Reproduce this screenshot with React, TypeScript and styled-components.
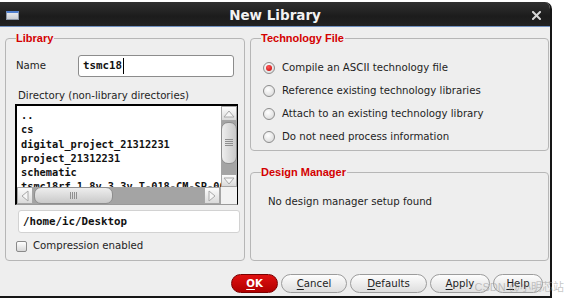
import React from 'react';
import styled, { createGlobalStyle } from 'styled-components';

const Global = createGlobalStyle`
  html, body { margin: 0; padding: 0; background: #fff; }
  body { width: 564px; height: 301px; overflow: hidden; font-family: "DejaVu Sans", sans-serif; }
`;

const Page = styled.div`
  position: relative;
  width: 564px;
  height: 301px;
  background: #fff;
  padding-top: 2px;
  box-sizing: border-box;
`;

const Window = styled.div`
  width: 552px;
  height: 296px;
  box-sizing: border-box;
  border-right: 2px solid #161616;
  border-bottom: 2px solid #161616;
  border-top-right-radius: 7px;
  background: #eeeeee;
  display: flex;
  flex-direction: column;
  overflow: hidden;
`;

const TitleBar = styled.div`
  height: 25px;
  flex: none;
  box-sizing: border-box;
  background: linear-gradient(#303030, #1c1c1c 60%, #222);
  border-bottom: 1px solid #7090c0;
  display: grid;
  grid-template-columns: 40px 1fr 40px;
  align-items: center;
`;

const WinIcon = styled.div`
  width: 13px;
  height: 9px;
  margin: 2px 0 0 6px;
  box-sizing: border-box;
  border: 1px solid #8a94a4;
  border-top: 2px solid #4f7fcf;
  background: linear-gradient(#e6e8ec, #c8ccd2);
`;

const TitleText = styled.div`
  text-align: center;
  color: #f2f2f2;
  font: bold 13.5px/16px "DejaVu Sans", sans-serif;
  padding-top: 2px;
`;

const CloseBox = styled.div`
  display: flex;
  justify-content: flex-end;
  padding: 3px 9px 0 0;
`;

const Body = styled.div`
  flex: 1;
  display: flex;
  flex-direction: column;
  padding: 5px 1px 0 5px;
`;

const Columns = styled.div`
  display: flex;
  gap: 5px;
`;

const LeftCol = styled.div`
  width: 240px;
  display: flex;
  flex-direction: column;
`;

const RightCol = styled.div`
  width: 299px;
  display: flex;
  flex-direction: column;
  gap: 15px;
`;

const Group = styled.fieldset<{ $h: number }>`
  margin: 0;
  min-width: 0;
  box-sizing: border-box;
  height: ${(p) => p.$h}px;
  border: 1px solid #b6b6b6;
  border-radius: 4px;
  padding: 0 10px;
`;

const GroupTitle = styled.legend`
  padding: 0 1px 0 0;
  font: bold 11px/13px "Liberation Sans", Arial, sans-serif;
  color: #d40000;
`;

const Text = styled.span`
  font: 10.2px/14px "DejaVu Sans", sans-serif;
  color: #1e1e1e;
  white-space: nowrap;
`;

const NameRow = styled.div`
  margin-top: 10px;
  height: 22px;
  display: flex;
  align-items: center;
`;

const NameLabel = styled(Text)`
  width: 62px;
`;

const TextField = styled.div`
  width: 156px;
  height: 22px;
  box-sizing: border-box;
  border: 1px solid #8c8c8c;
  border-radius: 3px;
  background: #fff;
  display: flex;
  align-items: center;
  padding-left: 4px;
  font: bold 10.8px/14px "DejaVu Sans Mono", monospace;
  color: #111;
`;

const Caret = styled.span`
  display: inline-block;
  width: 1px;
  height: 16px;
  margin-left: 1px;
  background: #000;
`;

const DirLabel = styled(Text)`
  display: block;
  margin-top: 12px;
  margin-left: 2px;
`;

const ListBox = styled.div`
  box-sizing: border-box;
  width: 223px;
  height: 101px;
  margin: 1px 0 0 -1px;
  border-top: 2px solid #000;
  border-left: 2px solid #000;
  border-right: 1px solid #000;
  border-bottom: 1px solid #9a9a9a;
  background: #fff;
  display: grid;
  grid-template-columns: 1fr 16px;
  grid-template-rows: 1fr 17px;
  overflow: hidden;
`;

const Items = styled.div`
  padding: 2px 0 0 4px;
  overflow: hidden;
`;

const Item = styled.div`
  font: bold 10.3px/14.3px "DejaVu Sans Mono", monospace;
  color: #111;
  white-space: nowrap;
`;

const VScroll = styled.div`
  background: #a4a4a4;
  display: flex;
  flex-direction: column;
`;

const HScroll = styled.div`
  background: #a4a4a4;
  display: flex;
  padding-right: 1px;
`;

const Corner = styled.div`
  background: #f2f2f2;
`;

const ArrowBtn = styled.div<{ $w: number; $h: number }>`
  flex: none;
  width: ${(p) => p.$w}px;
  height: ${(p) => p.$h}px;
  box-sizing: border-box;
  border: 1px solid #a6a6a6;
  background: linear-gradient(#fcfcfc, #dadada);
  display: flex;
  align-items: center;
  justify-content: center;
`;

const Thumb = styled.div<{ $vertical?: boolean }>`
  flex: none;
  box-sizing: border-box;
  border: 1px solid #8e8e8e;
  border-radius: 7px;
  background: ${(p) =>
    p.$vertical ? 'linear-gradient(90deg, #eeeeee, #c9c9c9)' : 'linear-gradient(#eeeeee, #c9c9c9)'};
  display: flex;
  align-items: center;
  justify-content: center;
`;

const PathField = styled.div`
  width: 222px;
  height: 23px;
  margin: 5px 0 0 2px;
  box-sizing: border-box;
  border: 1px solid #d2d2d2;
  border-radius: 3px;
  background: #fff;
  padding-left: 4px;
  font: bold 10.8px/21px "DejaVu Sans Mono", monospace;
  color: #111;
`;

const CheckRow = styled.div`
  margin-top: 6px;
  height: 14px;
  display: flex;
  align-items: center;
  gap: 6px;
`;

const CheckBox = styled.div`
  width: 11px;
  height: 11px;
  box-sizing: border-box;
  border: 1px solid #8a8a8a;
  border-radius: 2px;
  background: linear-gradient(#ffffff, #d8d8d8);
`;

const RadioList = styled.div`
  margin-top: 11px;
  display: flex;
  flex-direction: column;
`;

const RadioRow = styled.div`
  height: 23px;
  display: flex;
  align-items: center;
  gap: 7px;
  padding-left: 2px;
`;

const Radio = styled.div<{ $on?: boolean }>`
  width: 12px;
  height: 12px;
  box-sizing: border-box;
  border-radius: 50%;
  border: 1px solid #8c8c8c;
  background: radial-gradient(circle at 40% 35%, #ffffff, #d4d4d4);
  display: flex;
  align-items: center;
  justify-content: center;
  &::after {
    content: '';
    display: ${(p) => (p.$on ? 'block' : 'none')};
    width: 6px;
    height: 6px;
    border-radius: 50%;
    background: radial-gradient(circle at 40% 35%, #ff5a5a, #c00000);
  }
`;

const DMText = styled(Text)`
  display: block;
  margin: 16px 0 0 7px;
`;

const ButtonRow = styled.div`
  margin-top: 13px;
  height: 19px;
  display: flex;
  justify-content: flex-end;
  gap: 3px;
  padding-right: 6px;
`;

const Button = styled.div<{ $w: number; $primary?: boolean }>`
  width: ${(p) => p.$w}px;
  height: 19px;
  box-sizing: border-box;
  border-radius: 10px;
  border: 1px solid ${(p) => (p.$primary ? '#7a0000' : '#9c9c9c')};
  background: ${(p) =>
    p.$primary ? 'linear-gradient(#e01010, #b00000)' : 'linear-gradient(#fdfdfd, #dedede)'};
  color: ${(p) => (p.$primary ? '#fff' : '#1e1e1e')};
  font: ${(p) => (p.$primary ? 'bold' : 'normal')} 10.2px/17px "DejaVu Sans", sans-serif;
  text-align: center;
  u { text-underline-offset: 2px; }
`;

const Watermark = styled.div`
  position: absolute;
  right: 0;
  bottom: 7px;
  font: 11px/13px "Liberation Sans", "Noto Sans CJK SC", sans-serif;
  color: rgba(150, 150, 150, 0.55);
  white-space: nowrap;
`;

const Tri = ({ dir }: { dir: 'up' | 'down' | 'left' | 'right' }) => {
  const pts = {
    up: '1,8 6,2 11,8',
    down: '1,2 6,8 11,2',
    left: '8,1 2,6 8,11',
    right: '2,1 8,6 2,11',
  }[dir];
  const vert = dir === 'up' || dir === 'down';
  return (
    <svg width={vert ? 12 : 10} height={vert ? 10 : 12} viewBox={vert ? '0 0 12 10' : '0 0 10 12'}>
      <polygon points={pts} fill="#f6f6f6" stroke="#a8a8a8" strokeWidth="1" />
    </svg>
  );
};

const Grip = ({ vertical }: { vertical?: boolean }) =>
  vertical ? (
    <svg width="8" height="8" viewBox="0 0 8 8">
      {[0.5, 2.5, 4.5, 6.5].map((y) => (
        <line key={y} x1="0" x2="8" y1={y} y2={y} stroke="#8f8f8f" strokeWidth="1" />
      ))}
    </svg>
  ) : (
    <svg width="8" height="7" viewBox="0 0 8 7">
      {[0.5, 2.5, 4.5, 6.5].map((x) => (
        <line key={x} y1="0" y2="7" x1={x} x2={x} stroke="#8f8f8f" strokeWidth="1" />
      ))}
    </svg>
  );

const items = [
  '..',
  'cs',
  'digital_project_21312231',
  'project_21312231',
  'schematic',
  'tsmc18rf_1.8v_3.3v_T-018-CM-SP-005',
];

const radios = [
  'Compile an ASCII technology file',
  'Reference existing technology libraries',
  'Attach to an existing technology library',
  'Do not need process information',
];

export default function App() {
  return (
    <Page>
      <Global />
      <Window>
        <TitleBar>
          <WinIcon />
          <TitleText>New Library</TitleText>
          <CloseBox>
            <svg width="9" height="9" viewBox="0 0 9 9">
              <path d="M1 1 L8 8 M8 1 L1 8" stroke="#d6d6d6" strokeWidth="2" strokeLinecap="square" />
            </svg>
          </CloseBox>
        </TitleBar>
        <Body>
          <Columns>
            <LeftCol>
              <Group $h={229}>
                <GroupTitle>Library</GroupTitle>
                <NameRow>
                  <NameLabel>Name</NameLabel>
                  <TextField>
                    tsmc18
                    <Caret />
                  </TextField>
                </NameRow>
                <DirLabel>Directory (non-library directories)</DirLabel>
                <ListBox>
                  <Items>
                    {items.map((it) => (
                      <Item key={it}>{it}</Item>
                    ))}
                  </Items>
                  <VScroll>
                    <ArrowBtn $w={16} $h={15}>
                      <Tri dir="up" />
                    </ArrowBtn>
                    <Thumb $vertical style={{ height: 42, marginTop: 1 }}>
                      <Grip vertical />
                    </Thumb>
                    <div style={{ flex: 1 }} />
                    <ArrowBtn $w={16} $h={13}>
                      <Tri dir="down" />
                    </ArrowBtn>
                  </VScroll>
                  <HScroll>
                    <ArrowBtn $w={16} $h={17}>
                      <Tri dir="left" />
                    </ArrowBtn>
                    <Thumb style={{ width: 79, marginLeft: 1 }}>
                      <Grip />
                    </Thumb>
                    <div style={{ flex: 1 }} />
                    <ArrowBtn $w={16} $h={17}>
                      <Tri dir="right" />
                    </ArrowBtn>
                  </HScroll>
                  <Corner />
                </ListBox>
                <PathField>/home/ic/Desktop</PathField>
                <CheckRow>
                  <CheckBox />
                  <Text>Compression enabled</Text>
                </CheckRow>
              </Group>
            </LeftCol>
            <RightCol>
              <Group $h={119}>
                <GroupTitle>Technology File</GroupTitle>
                <RadioList>
                  {radios.map((r, i) => (
                    <RadioRow key={r}>
                      <Radio $on={i === 0} />
                      <Text>{r}</Text>
                    </RadioRow>
                  ))}
                </RadioList>
              </Group>
              <Group $h={95}>
                <GroupTitle>Design Manager</GroupTitle>
                <DMText>No design manager setup found</DMText>
              </Group>
            </RightCol>
          </Columns>
          <ButtonRow>
            <Button $w={47} $primary>
              <u>O</u>K
            </Button>
            <Button $w={66}>
              <u>C</u>ancel
            </Button>
            <Button $w={77}>
              <u>D</u>efaults
            </Button>
            <Button $w={60}>
              <u>A</u>pply
            </Button>
            <Button $w={50}>
              <u>H</u>elp
            </Button>
          </ButtonRow>
        </Body>
      </Window>
      <Watermark>CSDN @小明芯站</Watermark>
    </Page>
  );
}
